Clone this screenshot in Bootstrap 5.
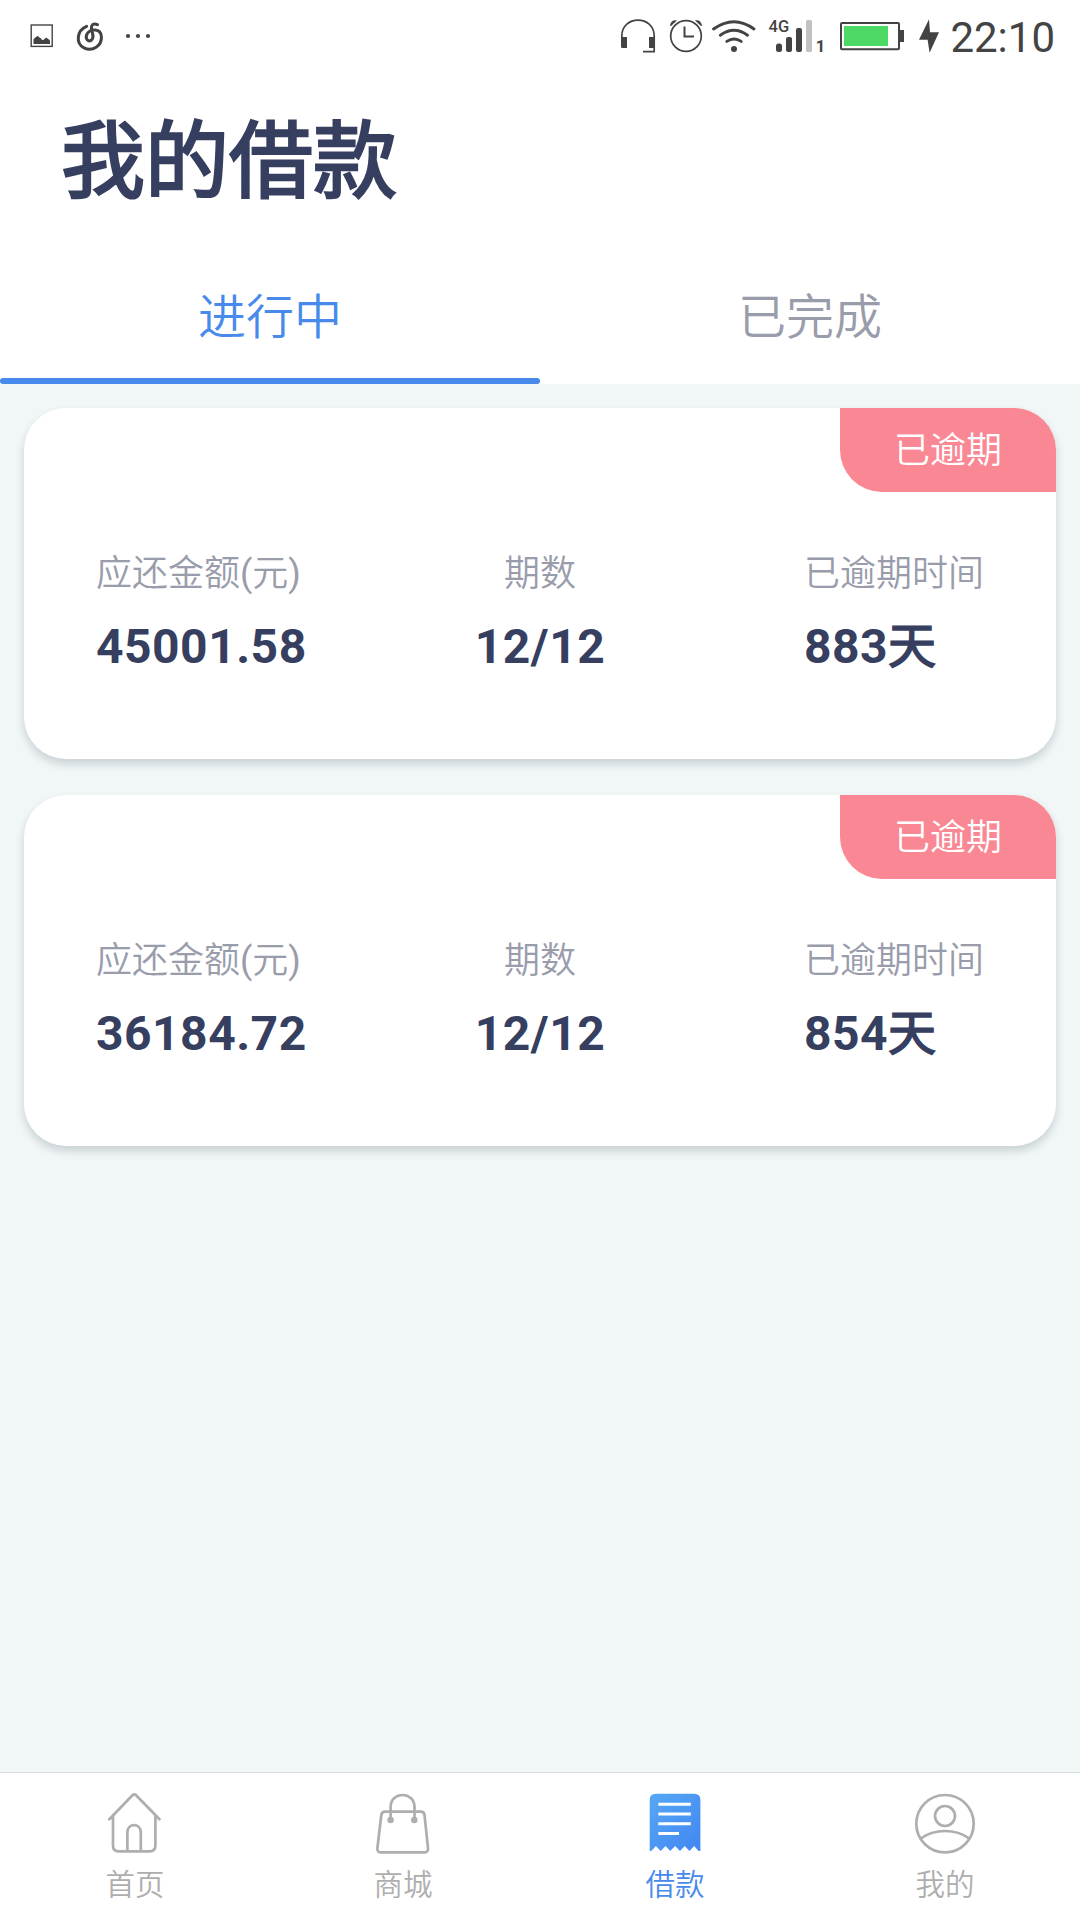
<!DOCTYPE html>
<html lang="zh-CN">
<head>
<meta charset="utf-8">
<meta name="viewport" content="width=device-width, initial-scale=1">
<title>我的借款</title>
<link href="https://cdn.jsdelivr.net/npm/bootstrap@5.3.0/dist/css/bootstrap.min.css" rel="stylesheet">
<style>
  body { font-family: Roboto, "Noto Sans CJK SC", sans-serif; background: #f1f6f7; color: #363f5f; overflow: hidden; }
  svg { display: block; flex: none; }
  .screen { height: 1920px; }
  .status-bar { height: 72px; padding-left: 30px; padding-right: 25px; color: #434343; }
  .clock { font-size: 42px; line-height: 72px; padding-top: 2px; margin-left: 9px; }
  .page-title { font-size: 84px; line-height: 100px; padding: 41px 61px 27px; font-weight: 400; -webkit-text-stroke: 2.4px #363f5f; }
  .loan-tabs .nav-link { height: 144px; font-size: 48px; line-height: 155px; padding: 0; color: #999cab; border-radius: 0; font-weight: 350; }
  .loan-tabs .nav-link.active { color: #488aec; }
  .loan-tabs .nav-link.active::after { content: ""; display: block; height: 6px; margin-top: -17px; border-radius: 3px; background: #488aec; position: relative; }
  .loan-list { padding: 24px; gap: 36px; }
  .loan-card { height: 351px; border-radius: 42px; border: 0; box-shadow: 0 5px 8px rgba(60, 80, 90, .22); color: inherit; }
  .overdue-tag { width: 216px; height: 84px; font-size: 36px; line-height: 86px; font-weight: 350; background: #fa8794; border-radius: 0 42px 0 42px; }
  .loan-facts { padding: 58px 72px 0; }
  .fact-label { font-size: 36px; line-height: 48px; color: #999cab; font-weight: 350; }
  .fact-value { font-size: 48px; line-height: 60px; margin-top: 19px; font-weight: 700; letter-spacing: .5px; }
  .day-unit { font-weight: 400; -webkit-text-stroke: 1.6px #363f5f; }
  .tab-bar { height: 148px; border-top: 1px solid #d8dce3; padding-top: 18px; }
  .tab-bar .nav-link { flex: 0 0 25%; padding: 0; font-size: 29.5px; line-height: 41px; font-weight: 350; color: #aeaeae; }
  .tab-bar .nav-link.active { color: #488aec; }
  .tab-bar svg { margin: 0 auto 10px; }
</style>
<script src="https://cdn.jsdelivr.net/npm/bootstrap@5.3.0/dist/js/bootstrap.bundle.min.js"></script>
</head>
<body>
<div class="screen d-flex flex-column">
  <header class="bg-white">
    <div class="status-bar d-flex justify-content-between">
      <div class="d-flex">
        <svg width="24" height="72" viewBox="30 0 24 72"><rect x="31.2" y="25" width="21" height="21.4" fill="none" stroke="#434343" stroke-width="1.4"/><path d="M33.500 44V39.500Q34 38 35.500 37.500Q37.500 34.500 39.500 37.500Q41.500 38 42 40Q44 40 45 38.500Q46.500 37 48 39Q50 39.500 50 41V44z" fill="#434343"/></svg>
        <svg width="68" height="72" viewBox="54 0 68 72"><path d="M86.6 26.3C76.500 30.500 75.500 43.500 84 47.800C92.500 52 102 46 101.400 36.500C100.800 28.500 90.500 28.300 87 34C84.500 39 88.500 42.300 91.300 40.300C94.500 38 92.500 33.500 91.500 29C91 25 93 22.800 97.500 24.600" fill="none" stroke="#434343" stroke-width="3" stroke-linecap="round"/></svg>
        <svg width="32" height="72" viewBox="122 0 32 72" fill="#434343"><circle cx="128" cy="36" r="2.1"/><circle cx="138" cy="36" r="2.1"/><circle cx="148" cy="36" r="2.1"/></svg>
      </div>
      <div class="d-flex">
        <svg width="44" height="72" viewBox="618 0 44 72"><path d="M621.800 38V36C621.800 14.700 654.200 14.700 654.200 36V51.700H643" fill="none" stroke="#434343" stroke-width="1.700"/><path d="M621 37h6v11h-4.500q-1.500 0-1.500-1.500zM649 37h6v11h-6z" fill="#434343"/></svg>
        <svg width="46" height="72" viewBox="662 0 46 72" fill="none" stroke="#434343"><circle cx="686" cy="36" r="15.300" stroke-width="1.700"/><path d="M684.500 26.500V36.500H694" stroke-width="2"/><path d="M670 26C670.500 21.500 673 19.700 677 20.500L671 26zM702 26C701.500 21.500 699 19.700 695 20.500L701 26z" fill="#434343" stroke="none"/></svg>
        <svg width="54" height="72" viewBox="708 0 54 72" fill="none" stroke="#434343" stroke-width="2.900" stroke-linecap="round"><path d="M713.500 29Q734 14.500 754 29M720.300 35.200Q734 25.500 747.500 35.200M726.800 41.400Q734 36.500 741.200 41.400"/><circle cx="734" cy="49" r="3" fill="#434343" stroke="none"/></svg>
        <svg width="70" height="72" viewBox="762 0 70 72" fill="#434343"><text x="768.500" y="32" font-size="16.500" font-weight="500" font-family="Roboto, sans-serif">4G</text><rect x="776" y="43.500" width="6" height="8.500" rx="2.500"/><rect x="786" y="37" width="6" height="15" rx="2"/><rect x="796" y="28" width="6" height="24" rx="2"/><rect x="806" y="20" width="6" height="32" rx="1.500" fill="#c2c2c2"/><text x="815.700" y="52" font-size="16.500" font-weight="700" font-family="Roboto, sans-serif">1</text></svg>
        <svg width="78" height="72" viewBox="832 0 78 72"><rect x="841" y="23" width="58" height="26.200" rx="1" fill="none" stroke="#434343" stroke-width="2"/><path d="M899 30h5v12h-5z" fill="#434343"/><path d="M844 26h44v20h-44z" fill="#4cd964"/></svg>
        <svg width="31" height="72" viewBox="910 0 31 72"><path d="M929 19.300L919 39.700H927.600L929.600 52.700L939 32.300H930z" fill="#434343"/></svg>
        <div class="clock">22:10</div>
      </div>
    </div>
    <h1 class="page-title m-0">我的借款</h1>
    <nav class="nav nav-justified loan-tabs">
      <a class="nav-link active" href="#">进行中</a>
      <a class="nav-link" href="#">已完成</a>
    </nav>
  </header>

  <main class="loan-list flex-grow-1 d-flex flex-column">
    <article class="card loan-card">
      <div class="overdue-tag text-white text-center align-self-end">已逾期</div>
      <div class="loan-facts">
        <div class="row g-0">
          <div class="col-4"><div class="fact-label">应还金额<span class="fw-normal">(</span>元<span class="fw-normal">)</span></div><div class="fact-value">45001.58</div></div>
          <div class="col-4 text-center"><div class="fact-label">期数</div><div class="fact-value">12/12</div></div>
          <div class="col-4 d-flex justify-content-end"><div><div class="fact-label">已逾期时间</div><div class="fact-value">883<span class="day-unit">天</span></div></div></div>
        </div>
      </div>
    </article>
    <article class="card loan-card">
      <div class="overdue-tag text-white text-center align-self-end">已逾期</div>
      <div class="loan-facts">
        <div class="row g-0">
          <div class="col-4"><div class="fact-label">应还金额<span class="fw-normal">(</span>元<span class="fw-normal">)</span></div><div class="fact-value">36184.72</div></div>
          <div class="col-4 text-center"><div class="fact-label">期数</div><div class="fact-value">12/12</div></div>
          <div class="col-4 d-flex justify-content-end"><div><div class="fact-label">已逾期时间</div><div class="fact-value">854<span class="day-unit">天</span></div></div></div>
        </div>
      </div>
    </article>
  </main>

  <nav class="nav tab-bar bg-white text-center">
    <a class="nav-link" href="#">
      <svg width="64" height="64" viewBox="0 0 64 64" fill="none" stroke="#aeaeae" stroke-width="2.700" stroke-linecap="round" stroke-linejoin="round"><path d="M6.300 28.300L29.500 4.200Q31.300 2.400 33.100 4.200L56.500 28.300M10 25V54.500Q10 60.300 15.800 60.300H46.600Q52.400 60.300 52.400 54.500V25M24.400 60V41.300C24.400 31.800 37.800 31.800 37.800 41.300V60"/></svg>
      首页</a>
    <a class="nav-link" href="#">
      <svg width="64" height="64" viewBox="0.700 0 64 64" fill="none" stroke="#aeaeae" stroke-width="2.700"><path d="M13 20.700H48.600Q51.700 20.700 52.200 24L55.700 57Q56 61.300 52.500 61.300H8.300Q4.700 61.300 5.100 57L9 24Q9.500 20.700 13 20.700zM18.300 29V16C18.300 0 42.200 0 42.200 16V29"/><g fill="#aeaeae" stroke="none"><circle cx="18.300" cy="29" r="3.300"/><circle cx="42" cy="29" r="3.300"/></g></svg>
      <span class="pe-1">商城</span></a>
    <a class="nav-link active" href="#">
      <svg width="64" height="64" viewBox="0 0 64 64"><defs><linearGradient id="receipt" x1="0" y1="0" x2="1" y2="1"><stop offset="0" stop-color="#55a8f5"/><stop offset="1" stop-color="#4286f2"/></linearGradient></defs><path d="M6.700 9Q6.700 2.700 13 2.700H51Q57.400 2.700 57.400 9V60H55.700L51.100 55 46.500 60 41.700 55 37 60 32.100 55 27.300 60 22.500 55 17.700 60 12.900 55 8.300 60H6.700z" fill="url(#receipt)"/><path d="M15.300 13.300H47.800M15.300 23H47.800M15.300 32.700H47.800M15.300 42.400H36" stroke="#fff" stroke-width="3"/></svg>
      借款</a>
    <a class="nav-link" href="#">
      <svg width="64" height="64" viewBox="0 0 64 64" fill="none" stroke="#aeaeae" stroke-width="2.700"><circle cx="32" cy="32.700" r="28.700"/><circle cx="32" cy="25" r="10"/><path d="M7.800 47.500Q18 40 32 40T56.200 47.500"/></svg>
      我的</a>
  </nav>
</div>
</body>
</html>
